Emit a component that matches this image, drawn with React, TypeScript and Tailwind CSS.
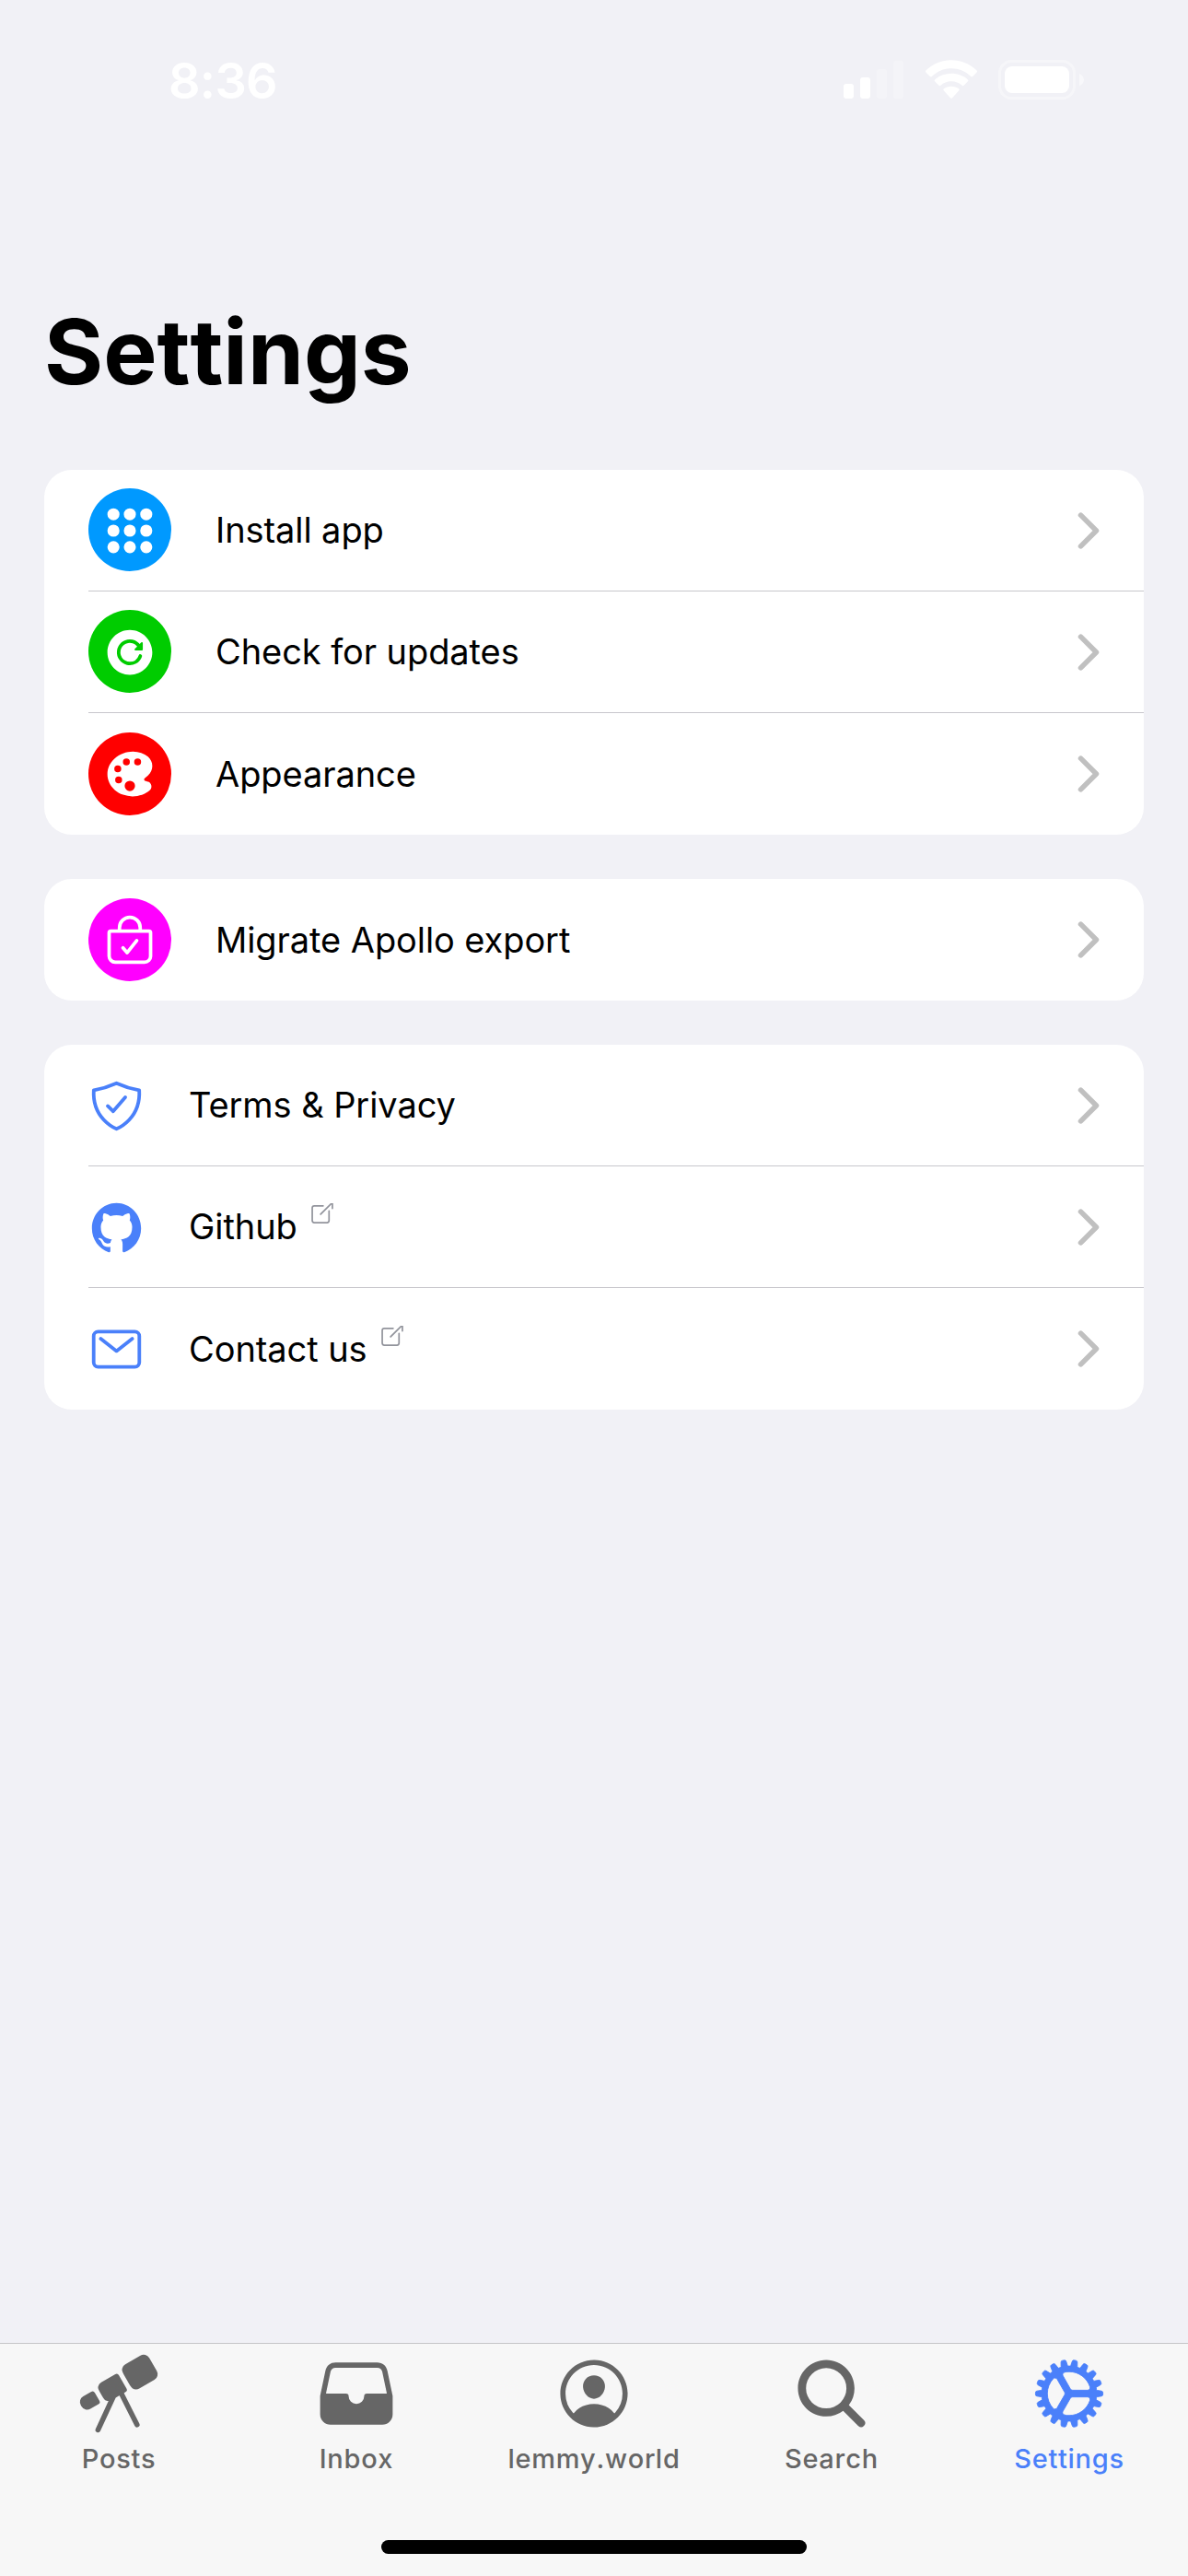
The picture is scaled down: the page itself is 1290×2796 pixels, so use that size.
import React from 'react';
import {
  IoApps,
  IoBagCheckOutline,
  IoChevronForward,
  IoCog,
  IoColorPalette,
  IoFileTray,
  IoLogoGithub,
  IoMailOutline,
  IoPersonCircleOutline,
  IoReloadCircle,
  IoSearch,
  IoShieldCheckmarkOutline,
  IoTelescope,
} from 'react-icons/io5';
import type { IconType } from 'react-icons';

type Item = { label: string; icon: IconType; color?: string; external?: boolean };

const groups: Item[][] = [
  [
    { label: 'Install app', icon: IoApps, color: 'bg-[#0099ff]' },
    { label: 'Check for updates', icon: IoReloadCircle, color: 'bg-[#00cc00]' },
    { label: 'Appearance', icon: IoColorPalette, color: 'bg-[#ff0000]' },
  ],
  [{ label: 'Migrate Apollo export', icon: IoBagCheckOutline, color: 'bg-[#ff00ff]' }],
  [
    { label: 'Terms & Privacy', icon: IoShieldCheckmarkOutline },
    { label: 'Github', icon: IoLogoGithub, external: true },
    { label: 'Contact us', icon: IoMailOutline, external: true },
  ],
];

const tabs: { label: string; icon: IconType; active?: boolean }[] = [
  { label: 'Posts', icon: IoTelescope },
  { label: 'Inbox', icon: IoFileTray },
  { label: 'lemmy.world', icon: IoPersonCircleOutline },
  { label: 'Search', icon: IoSearch },
  { label: 'Settings', icon: IoCog, active: true },
];

const StatusBar = () => (
  <div className="flex h-[177px] items-start justify-between pl-[183px] pr-[112px] text-white">
    <span className="mt-[55px] text-[54px] font-semibold leading-[66px] tracking-[-0.7px]">8:36</span>
    <div className="mt-[65px] flex h-[43px] items-start">
      <svg width="66" height="43" viewBox="0 0 66 43" fill="currentColor">
        <rect x="0" y="26" width="11" height="16" rx="3" />
        <rect x="18" y="19" width="11" height="23" rx="3" />
        <rect x="36" y="10" width="11" height="32" rx="3" opacity="0.25" />
        <rect x="54" y="1" width="11" height="41" rx="3" opacity="0.25" />
      </svg>
      <svg className="ml-[22px]" width="58" height="43" viewBox="0 0 58 43" fill="currentColor">
        <path d="M29 9.2c8.2 0 15.6 3.2 21.2 8.7q1 .9 1.900 0l4.500-4.500q.9-1 0-1.900C49.300 4.400 39.500.3 29 .3S8.700 4.400 1.400 11.500q-.9.900 0 1.900l4.500 4.500q.9.900 1.900 0C13.400 12.400 20.800 9.200 29 9.200z" />
        <path d="M29 23.300c4.500 0 8.500 1.700 11.600 4.500q1 .9 1.900 0l4.500-4.500q.9-1-.1-1.900C42.200 17.200 35.900 14.800 29 14.800s-13.200 2.400-17.900 6.600q-1 .9-.1 1.900l4.500 4.500q.9.900 1.900 0C20.500 25 24.500 23.300 29 23.300z" />
        <path d="M37.300 33.200q1-1-.1-1.900c-2.200-1.700-5.100-2.600-8.200-2.600s-6 .9-8.200 2.600q-1.100.9-.1 1.900l7.300 8.100q1 1 2 0z" />
      </svg>
      <svg className="ml-[22px]" width="94" height="43" viewBox="0 0 94 43" fill="currentColor">
        <rect x="1.500" y="1.500" width="81" height="40" rx="13" fill="none" stroke="currentColor" strokeWidth="3" opacity="0.4" />
        <rect x="7" y="7" width="70" height="29" rx="8" />
        <path d="M88 15v13.500c3-1.300 5-3.800 5-6.700s-2-5.500-5-6.800z" opacity="0.5" />
      </svg>
    </div>
  </div>
);

// the arrow head runs past the top edge of the box
const ExternalIcon = () => (
  <svg
    className="mb-[28px] ml-[15px] text-[#92949c]"
    width="24"
    height="22"
    viewBox="48 78 416 386"
    fill="none"
    stroke="currentColor"
    strokeWidth="30"
    strokeLinecap="round"
    strokeLinejoin="round"
  >
    <path d="M384 224v184a40 40 0 0 1-40 40H104a40 40 0 0 1-40-40V168a40 40 0 0 1 40-40h167.480" />
    <path d="M336 64h112v112M224 288 440 72" />
  </svg>
);

const ListItem = ({ item, last }: { item: Item; last: boolean }) => {
  const Icon = item.icon;
  const shift = last ? '' : 'pb-0.5';
  return (
    <li className="flex h-[132px] items-stretch pl-12">
      {item.color ? (
        <div className={`flex items-center pr-12 ${shift}`}>
          <span
            className={`flex size-[90px] items-center justify-center rounded-full text-white ${last ? '' : 'pt-0.5'} ${item.color}`}
          >
            <Icon className="size-[60px]" />
          </span>
        </div>
      ) : (
        <div className="flex items-center pr-12 pt-px text-[#4a80fa]">
          <Icon className="size-[61px]" />
        </div>
      )}
      <span className={`flex items-center text-[38px] tracking-[-0.08px] ${shift}`}>
        {item.label}
        {item.external && <ExternalIcon />}
      </span>
      <IoChevronForward className="my-auto ml-auto mr-[30px] size-[60px] text-[#c0c0c0]" />
    </li>
  );
};

export default function App() {
  return (
    <div className="flex h-[2796px] w-[1290px] flex-col overflow-hidden bg-[#f1f1f6] font-[Inter,sans-serif] text-black">
      <StatusBar />
      <h1 className="mt-[145px] pl-12 text-[98px] font-bold leading-[120px] [font-kerning:none]">Settings</h1>

      <main className="mt-[68px] flex flex-1 flex-col gap-12 px-12">
        {groups.map((items, i) => (
          <ul key={i} className="overflow-hidden rounded-[30px] bg-white">
            {items.map((item, j) => (
              <React.Fragment key={item.label}>
                {j > 0 && <div className="-mt-px ml-12 h-px bg-[#c8c7cc]" />}
                <ListItem item={item} last={j === items.length - 1} />
              </React.Fragment>
            ))}
          </ul>
        ))}
      </main>

      <nav className="flex h-[253px] flex-col border-t border-[#c6c6c8] bg-[#f7f7f7]">
        <div className="flex">
          {tabs.map(({ label, icon: Icon, active }) => (
            <div
              key={label}
              className={`flex w-[258px] flex-col items-center pt-[9px] ${active ? 'text-[#4a80fa]' : 'text-[#666666]'}`}
            >
              <Icon className={active ? 'size-[90px] stroke-[5px]' : 'size-[90px]'} />
              <span className="mt-[8px] text-[29px] font-medium leading-[36px] tracking-[0.7px] [font-kerning:none]">
                {label}
              </span>
            </div>
          ))}
        </div>
        <div className="mx-auto mb-[24px] mt-auto h-[15px] w-[462px] rounded-full bg-black" />
      </nav>
    </div>
  );
}
